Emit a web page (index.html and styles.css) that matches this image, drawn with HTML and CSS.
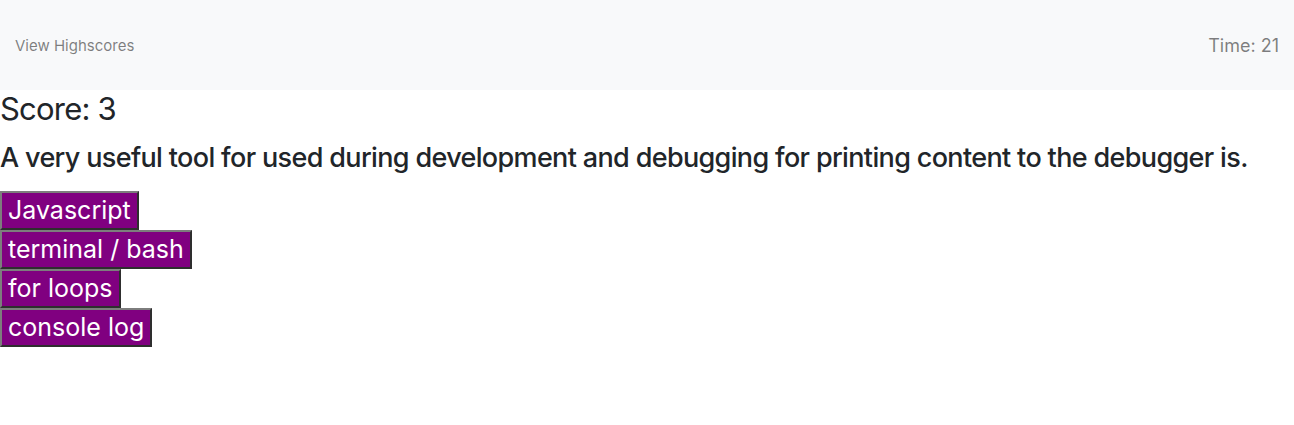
FILE: index.html
```html
<!DOCTYPE html>
<html>
<head>
<meta charset="utf-8">
<link rel="stylesheet" href="styles.css">
</head>
<body>
<nav class="navbar">
  <a class="nav-link" href="#">View Highscores</a>
  <span class="timer">Time: 21</span>
</nav>
<main class="quiz">
  <h2 class="score">Score: 3</h2>
  <h4 class="question">A very useful tool for used during development and debugging for printing content to the debugger is.</h4>
  <div class="choices">
    <button class="choice">Javascript</button>
    <button class="choice">terminal / bash</button>
    <button class="choice">for loops</button>
    <button class="choice">console log</button>
  </div>
</main>
</body>
</html>
```
FILE: styles.css
```css
* { box-sizing: border-box; }
body {
  margin: 0;
  font-family: Inter, "Noto Sans", sans-serif;
  color: #212529;
  background: #fff;
  line-height: 1.5;
}
.navbar {
  height: 90px;
  background: #f8f9fa;
  display: flex;
  justify-content: space-between;
  align-items: center;
  padding: 0 15px;
}
.nav-link {
  font-size: 15px;
  color: rgba(0,0,0,.5);
  text-decoration: none;
  padding-top: 2px;
}
.timer {
  font-size: 18px;
  color: rgba(0,0,0,.5);
}
.score {
  margin: 0 0 15px;
  font-size: 31px;
  letter-spacing: -0.8px;
  font-weight: 400;
  line-height: 1.2;
}
.question {
  margin: 0 0 16px;
  font-size: 27px;
  letter-spacing: -0.65px;
  font-weight: 500;
  line-height: 1.2;
}
.choices {
  display: flex;
  flex-direction: column;
  align-items: flex-start;
}
.choice {
  font-family: inherit;
  font-size: 25px;
  line-height: 33px;
  padding: 1px 6px;
  color: #fff;
  background: #800080;
  border: 2px solid;
  border-color: #7d7d7d #2e2e2e #2e2e2e #7d7d7d;
  margin: 0;
}
```
